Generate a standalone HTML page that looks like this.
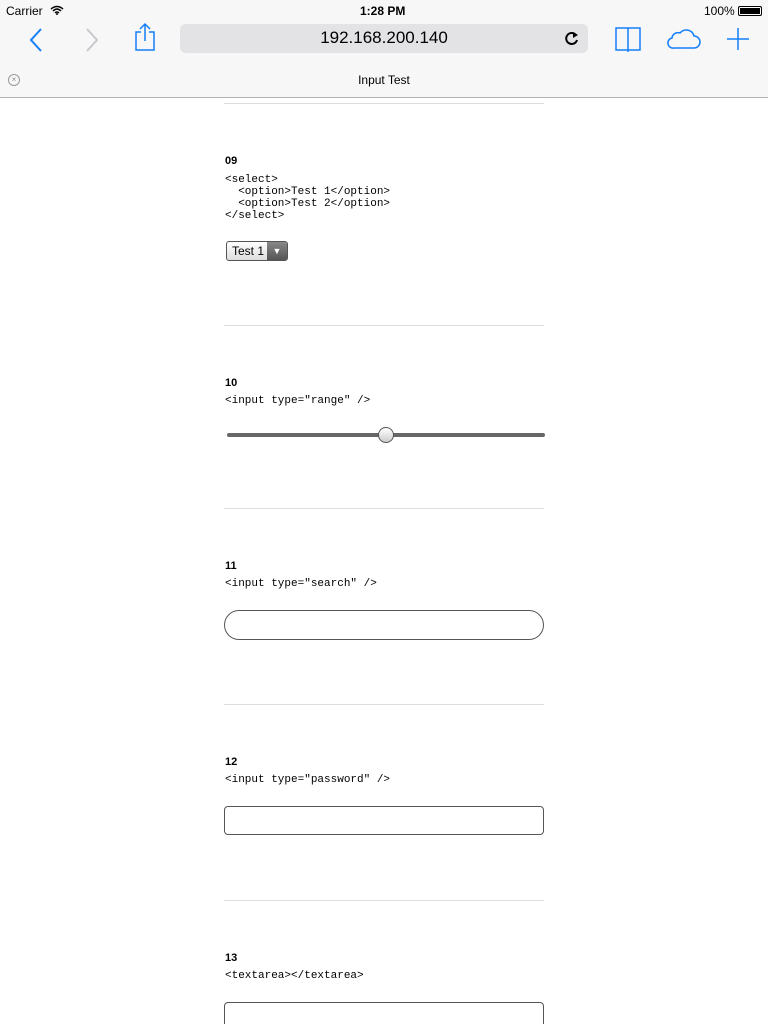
<!DOCTYPE html>
<html style="overflow:hidden"><head><meta charset="utf-8"><style>
html,body{overflow:hidden;height:1024px}
body{margin:0;width:768px;background:#fff;font-family:"Liberation Sans",sans-serif;position:relative}
.bar{position:absolute;left:0;top:0;width:768px;height:97px;background:#f7f7f7;border-bottom:1px solid #b2b2b2}
.a{position:absolute}
.hr{position:absolute;left:224px;width:320px;height:1px;background:#ddd}
.n{position:absolute;left:225px;font-weight:bold;font-size:11px;color:#000}
pre{position:absolute;left:225px;margin:0;font-family:"Liberation Mono",monospace;font-size:11px;line-height:12px;color:#000}
.inp{position:absolute;left:224px;width:318px;height:27px;border:1px solid #555;background:#fff}
</style></head><body>
<div class="bar">
<div class="a" style="left:6px;top:4px;font-size:12px">Carrier</div>
<svg class="a" style="left:50px;top:5px" width="14" height="10" viewBox="0 0 14 10"><path d="M1 4Q7 -1 13 4M3 6Q7 2 11 6M5 8Q7 6 9 8" stroke="#000" stroke-width="1.5" fill="none"/><circle cx="7" cy="9" r="1" fill="#000"/></svg>
<div class="a" style="left:360px;top:4px;font-size:12px;font-weight:bold">1:28 PM</div>
<div class="a" style="left:704px;top:4px;font-size:12px">100%</div>
<div class="a" style="left:738px;top:6px;width:22px;height:8px;border:1px solid #000;border-radius:2px;background:#000;box-shadow:inset 0 0 0 1px #fff"></div>
<svg class="a" style="left:28px;top:27px" width="16" height="26"><path d="M13 2L3 13L13 24" stroke="#147efb" stroke-width="2" fill="none"/></svg>
<svg class="a" style="left:84px;top:27px" width="16" height="26"><path d="M3 2L13 13L3 24" stroke="#c7c7cc" stroke-width="2" fill="none"/></svg>
<svg class="a" style="left:132px;top:22px" width="26" height="30"><path d="M9 10H4V28H22V10H17M13 19V2M8 7L13 2L18 7" stroke="#147efb" stroke-width="1.5" fill="none"/></svg>
<div class="a" style="left:180px;top:24px;width:408px;height:29px;background:#e3e3e5;border-radius:6px"></div>
<div class="a" style="left:180px;top:28px;width:408px;text-align:center;font-size:17px">192.168.200.140</div>
<svg class="a" style="left:565px;top:31px" width="14" height="15" viewBox="0 0 14 15"><path d="M11 4A5.5 5.5 0 1 0 12 9" stroke="#000" stroke-width="2" fill="none"/><path d="M8 1L13 4L8 7Z" fill="#000"/></svg>
<svg class="a" style="left:614px;top:26px" width="28" height="26"><path d="M2 2H26V24H2ZM14 2V26" stroke="#147efb" stroke-width="1.5" fill="none"/></svg>
<svg class="a" style="left:666px;top:26px" width="36" height="24"><path d="M8 22H28A6 6 0 0 0 28 10A8 8 0 0 0 14 7A6 6 0 0 0 6 12A5 5 0 0 0 8 22Z" stroke="#147efb" stroke-width="1.5" fill="none"/></svg>
<svg class="a" style="left:726px;top:27px" width="24" height="24"><path d="M12 1V23M1 12H23" stroke="#147efb" stroke-width="1.5"/></svg>
<div class="a" style="left:8px;top:74px;width:10px;height:10px;border:1px solid #999;border-radius:50%;font-size:8px;line-height:10px;text-align:center;color:#888">×</div>
<div class="a" style="left:0;top:73px;width:768px;text-align:center;font-size:12px">Input Test</div>
</div>
<div class="hr" style="top:103px"></div>
<div class="n" style="top:155px">09</div>
<pre style="top:174px">&lt;select&gt;
  &lt;option&gt;Test 1&lt;/option&gt;
  &lt;option&gt;Test 2&lt;/option&gt;
&lt;/select&gt;</pre>
<div class="a" style="left:226px;top:241px;width:60px;height:18px;border:1px solid #555;border-radius:3px;background:linear-gradient(#fff,#ddd);overflow:hidden">
<div class="a" style="left:5px;top:2px;font-size:12px">Test 1</div>
<div class="a" style="right:0;top:0;width:20px;height:18px;background:linear-gradient(#888,#555);color:#fff;font-size:9px;text-align:center;line-height:18px">▼</div></div>
<div class="hr" style="top:325px"></div>
<div class="n" style="top:377px">10</div>
<pre style="top:395px">&lt;input type="range" /&gt;</pre>
<div class="a" style="left:227px;top:433px;width:318px;height:4px;background:#666;border-radius:2px"></div>
<div class="a" style="left:378px;top:427px;width:14px;height:14px;border:1px solid #555;border-radius:50%;background:linear-gradient(#fff,#ccc)"></div>
<div class="hr" style="top:508px"></div>
<div class="n" style="top:560px">11</div>
<pre style="top:578px">&lt;input type="search" /&gt;</pre>
<div class="inp" style="top:610px;border-radius:15px;height:28px"></div>
<div class="hr" style="top:704px"></div>
<div class="n" style="top:756px">12</div>
<pre style="top:774px">&lt;input type="password" /&gt;</pre>
<div class="inp" style="top:806px;border-radius:4px"></div>
<div class="hr" style="top:900px"></div>
<div class="n" style="top:952px">13</div>
<pre style="top:970px">&lt;textarea&gt;&lt;/textarea&gt;</pre>
<div class="inp" style="top:1002px;border-radius:4px;height:40px"></div>
</body></html>
